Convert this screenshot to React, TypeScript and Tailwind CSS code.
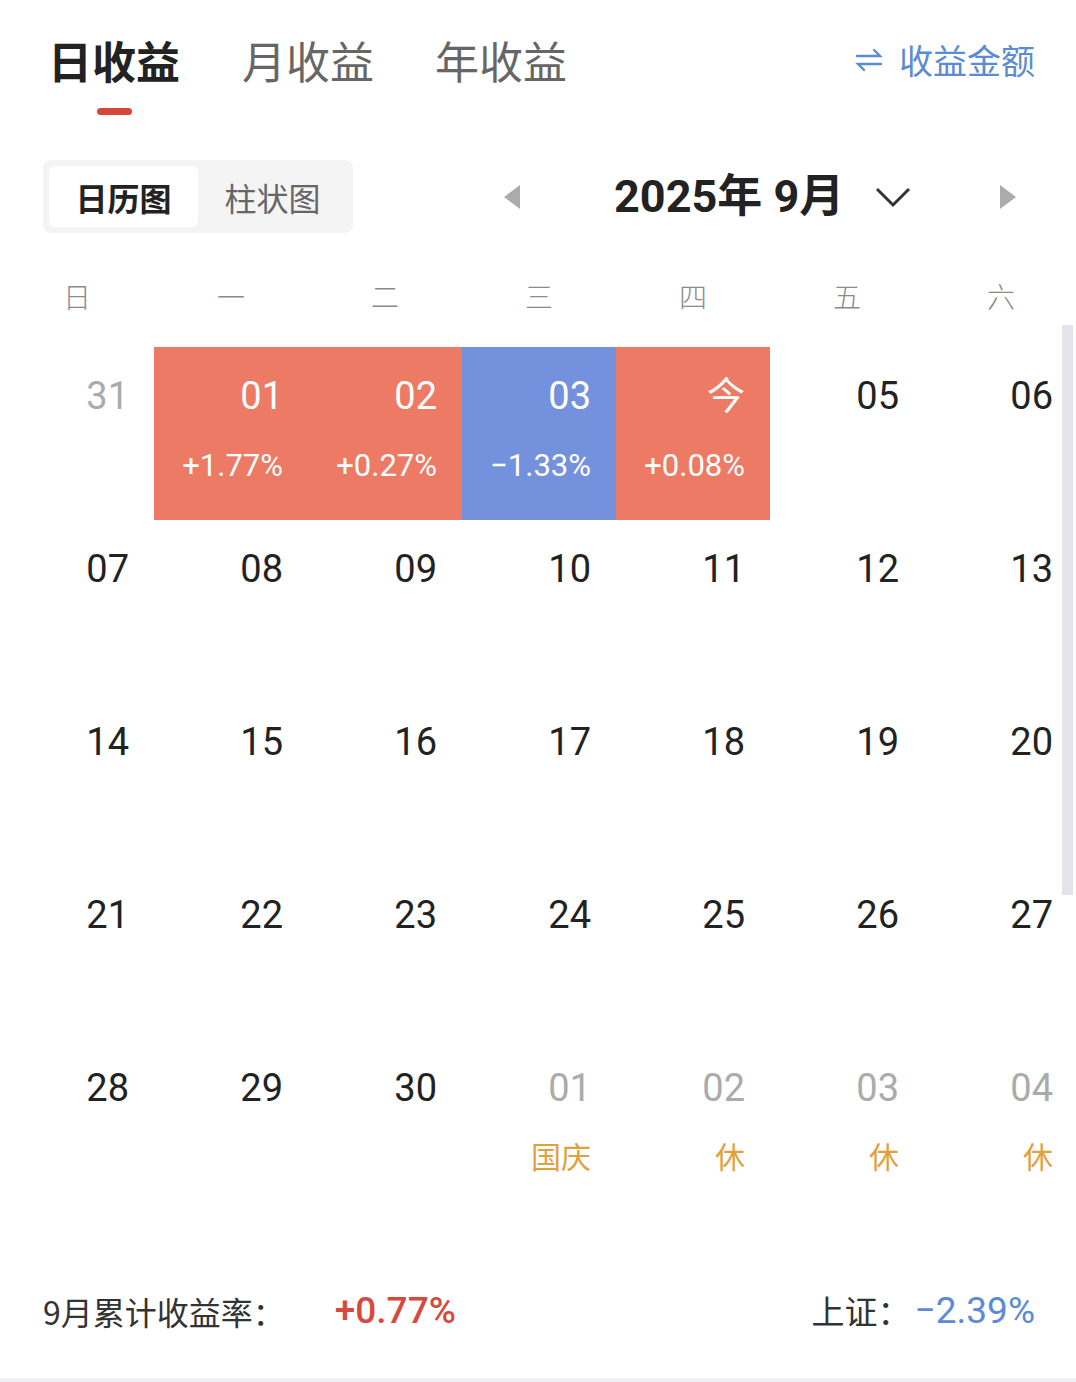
import React from 'react';

type Cell = {
  d: string;
  pct?: string;
  tone?: 'up' | 'down';
  muted?: boolean;
  note?: string;
};

const rows: Cell[][] = [
  [
    { d: '31', muted: true },
    { d: '01', pct: '+1.77%', tone: 'up' },
    { d: '02', pct: '+0.27%', tone: 'up' },
    { d: '03', pct: '−1.33%', tone: 'down' },
    { d: '今', pct: '+0.08%', tone: 'up' },
    { d: '05' },
    { d: '06' },
  ],
  ['07', '08', '09', '10', '11', '12', '13'].map((d) => ({ d })),
  ['14', '15', '16', '17', '18', '19', '20'].map((d) => ({ d })),
  ['21', '22', '23', '24', '25', '26', '27'].map((d) => ({ d })),
  [
    { d: '28' },
    { d: '29' },
    { d: '30' },
    { d: '01', muted: true, note: '国庆' },
    { d: '02', muted: true, note: '休' },
    { d: '03', muted: true, note: '休' },
    { d: '04', muted: true, note: '休' },
  ],
];

const weekdays = ['日', '一', '二', '三', '四', '五', '六'];

function Triangle({ dir }: { dir: 'left' | 'right' }) {
  return (
    <svg width="18" height="24" viewBox="0 0 18 24">
      {dir === 'left' ? (
        <polygon points="17,0 17,24 1,12" fill="#ababab" />
      ) : (
        <polygon points="1,0 1,24 17,12" fill="#ababab" />
      )}
    </svg>
  );
}

function DayCell({ cell }: { cell: Cell }) {
  const bg =
    cell.tone === 'up' ? 'bg-[#ed7a64]' : cell.tone === 'down' ? 'bg-[#7491de]' : '';
  const numColor = cell.tone ? 'text-white' : cell.muted ? 'text-[#ababab]' : 'text-[#222]';
  return (
    <div className={`h-[173px] flex flex-col items-end pr-[25px] ${bg}`}>
      <div className={`mt-[27px] h-[44px] leading-[44px] text-[38px] ${numColor}`}>{cell.d}</div>
      {cell.pct && (
        <div className="mt-[30px] h-[36px] leading-[36px] text-[31px] text-white">{cell.pct}</div>
      )}
      {cell.note && (
        <div className="mt-[30px] h-[36px] leading-[36px] text-[30px] text-[#e0a13c]">{cell.note}</div>
      )}
    </div>
  );
}

export default function App() {
  return (
    <div className="relative w-[1076px] h-[1382px] overflow-hidden bg-white font-['Roboto','Noto_Sans_CJK_SC',sans-serif]">
      {/* tabs */}
      <div className="h-[160px] flex items-start pl-[48px] pr-[41px] font-['Noto_Sans_CJK_SC',sans-serif]">
        <div className="flex flex-col items-center">
          <div className="mt-[38px] h-[44px] leading-[44px] text-[44px] font-bold text-[#222]">日收益</div>
          <div className="mt-[26px] h-[7px] w-[35px] rounded-full bg-[#d7463b]" />
        </div>
        <div className="ml-[62px] mt-[38px] h-[44px] leading-[44px] text-[44px] text-[#666]">月收益</div>
        <div className="ml-[61px] mt-[38px] h-[44px] leading-[44px] text-[44px] text-[#666]">年收益</div>
        <div className="ml-auto mt-[42px] flex items-center gap-[16px] text-[#5b8bd0]">
          <svg width="28" height="28" viewBox="0 0 28 28" fill="none" stroke="#5b8bd0" strokeWidth="2.4" strokeLinecap="round">
            <path d="M2 10 H25 L19 4" />
            <path d="M26 18 H3 L9 24" />
          </svg>
          <span className="h-[36px] leading-[36px] text-[34px]">收益金额</span>
        </div>
      </div>

      {/* controls */}
      <div className="h-[73px] flex items-center">
        <div className="ml-[43px] w-[310px] h-[73px] rounded-[8px] bg-[#f4f4f4] p-[6px] flex items-center font-['Noto_Sans_CJK_SC',sans-serif]">
          <div className="w-[149px] h-[61px] rounded-[6px] bg-white flex items-center justify-center text-[32px] font-bold text-[#222]">
            日历图
          </div>
          <div className="flex-1 flex items-center justify-center text-[32px] text-[#666]">柱状图</div>
        </div>
        <div className="ml-[150px] flex items-center">
          <Triangle dir="left" />
        </div>
        <div className="ml-[93px] text-[45px] leading-[50px] font-bold text-[#222]">2025年 9月</div>
        <svg className="ml-[31px]" width="36" height="22" viewBox="0 0 36 22" fill="none" stroke="#333" strokeWidth="3">
          <polyline points="2,3 18,19 34,3" />
        </svg>
        <div className="ml-[88px] flex items-center">
          <Triangle dir="right" />
        </div>
      </div>

      {/* weekdays */}
      <div className="mt-[31px] h-[64px] grid grid-cols-[repeat(7,154px)] items-center font-['Noto_Sans_CJK_SC',sans-serif]">
        {weekdays.map((w) => (
          <div key={w} className="text-center text-[28px] text-[#8a8a8a] font-light">
            {w}
          </div>
        ))}
      </div>

      {/* calendar */}
      <div className="mt-[19px] grid grid-cols-[repeat(7,154px)]">
        {rows.map((row, ri) =>
          row.map((cell, ci) => <DayCell key={`${ri}-${ci}`} cell={cell} />)
        )}
      </div>

      {/* summary */}
      <div className="mt-[79px] h-[40px] flex items-center pl-[43px] pr-[41px]">
        <span className="text-[32px] text-[#333] font-['Noto_Sans_CJK_SC',sans-serif]">9月累计收益率：</span>
        <span className="ml-[50px] text-[37px] font-medium text-[#d54a3e]">+0.77%</span>
        <span className="ml-auto text-[33px] text-[#333] font-['Noto_Sans_CJK_SC',sans-serif]">上证：</span>
        <span className="ml-[4px] text-[37px] text-[#5a8ad8]">−2.39%</span>
      </div>
      <div className="mt-[47px] h-[4px] bg-[#f0f0f2]" />

      {/* scrollbar */}
      <div className="absolute left-[1062px] top-[325px] w-[11px] h-[570px] bg-[#e3e3e9]" />
    </div>
  );
}
